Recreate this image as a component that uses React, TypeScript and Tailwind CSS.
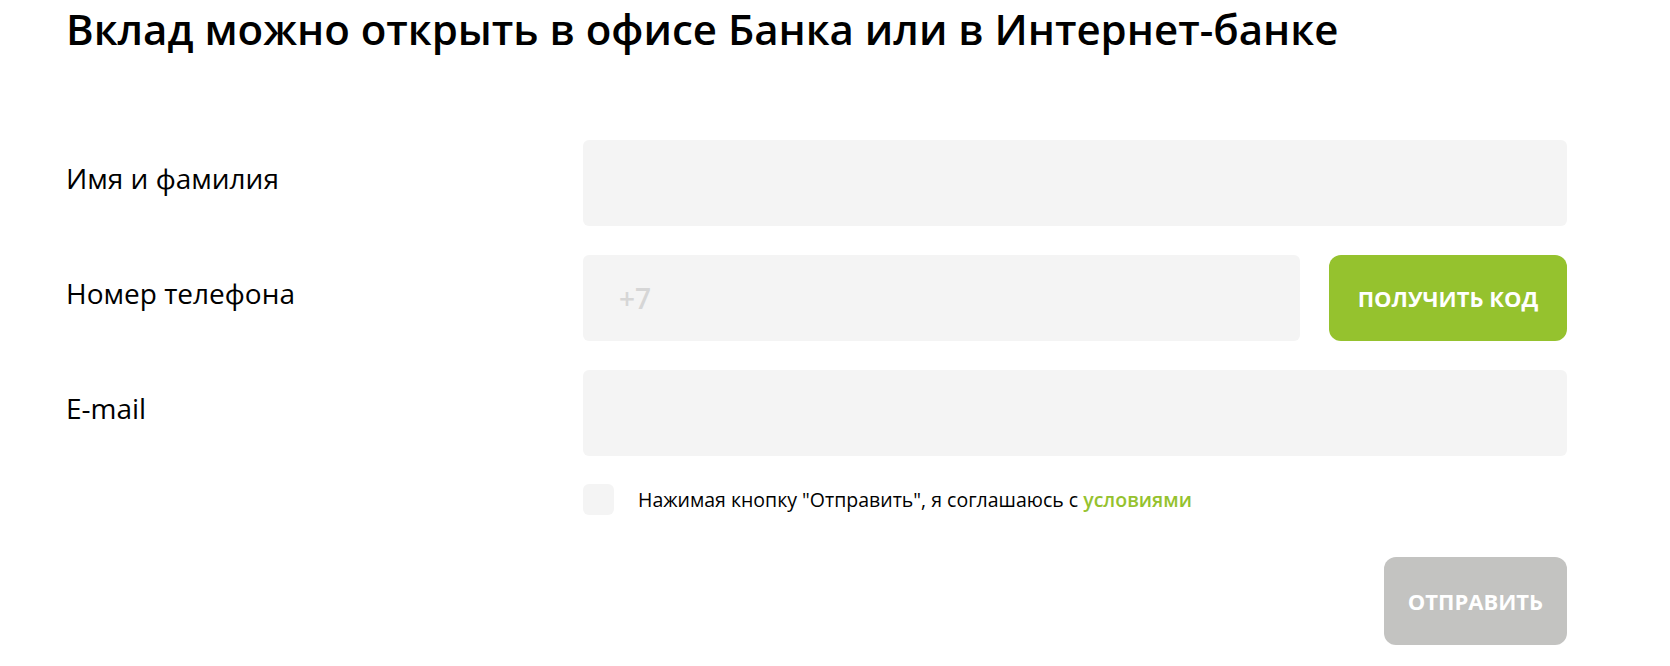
const Field = ({ label, children }: { label: string; children: React.ReactNode }) => {
  return (
    <div className="grid grid-cols-[517px_1fr] items-center">
      <label className="block pb-[10px] text-[28px] text-black leading-none">{label}</label>
      {children}
    </div>
  );
};

const App = () => {
  return (
    <section className="bg-white w-[1670px] h-[666px] pl-[66px] pr-[103px] pt-[8px] font-['Open_Sans',sans-serif]">
      <h1 className="text-[42px] font-semibold leading-none text-black">
        Вклад можно открыть в офисе Банка или в Интернет-банке
      </h1>

      <form className="mt-[90px] flex flex-col gap-[29px]">
        <Field label="Имя и фамилия">
          <input className="h-[86px] w-full rounded-md bg-[#f4f4f4] px-9 outline-none" />
        </Field>

        <Field label="Номер телефона">
          <div className="flex gap-[29px]">
            <input
              placeholder="+7"
              className="h-[86px] flex-1 rounded-md bg-[#f4f4f4] px-9 text-[28px] font-semibold outline-none placeholder:text-[#d6d6d6]"
            />
            <button
              type="button"
              className="h-[86px] w-[238px] rounded-xl bg-[#95c22e] text-[22px] font-bold uppercase text-white"
            >
              Получить код
            </button>
          </div>
        </Field>

        <Field label="E-mail">
          <input className="h-[86px] w-full rounded-md bg-[#f4f4f4] px-9 outline-none" />
        </Field>
      </form>

      <div className="mt-[28px] ml-[517px] flex items-center gap-[24px]">
        <div className="h-[31px] w-[31px] rounded-md bg-[#f4f4f4]"></div>
        <span className="text-[19.5px] text-black">
          Нажимая кнопку "Отправить", я соглашаюсь с{" "}
          <a className="font-semibold text-[#95c22e]">условиями</a>
        </span>
      </div>

      <div className="mt-[42px] flex justify-end">
        <button
          type="button"
          className="h-[88px] w-[183px] rounded-xl bg-[#c3c3c1] text-[22px] font-bold uppercase text-white"
        >
          Отправить
        </button>
      </div>
    </section>
  );
};

export default App;
